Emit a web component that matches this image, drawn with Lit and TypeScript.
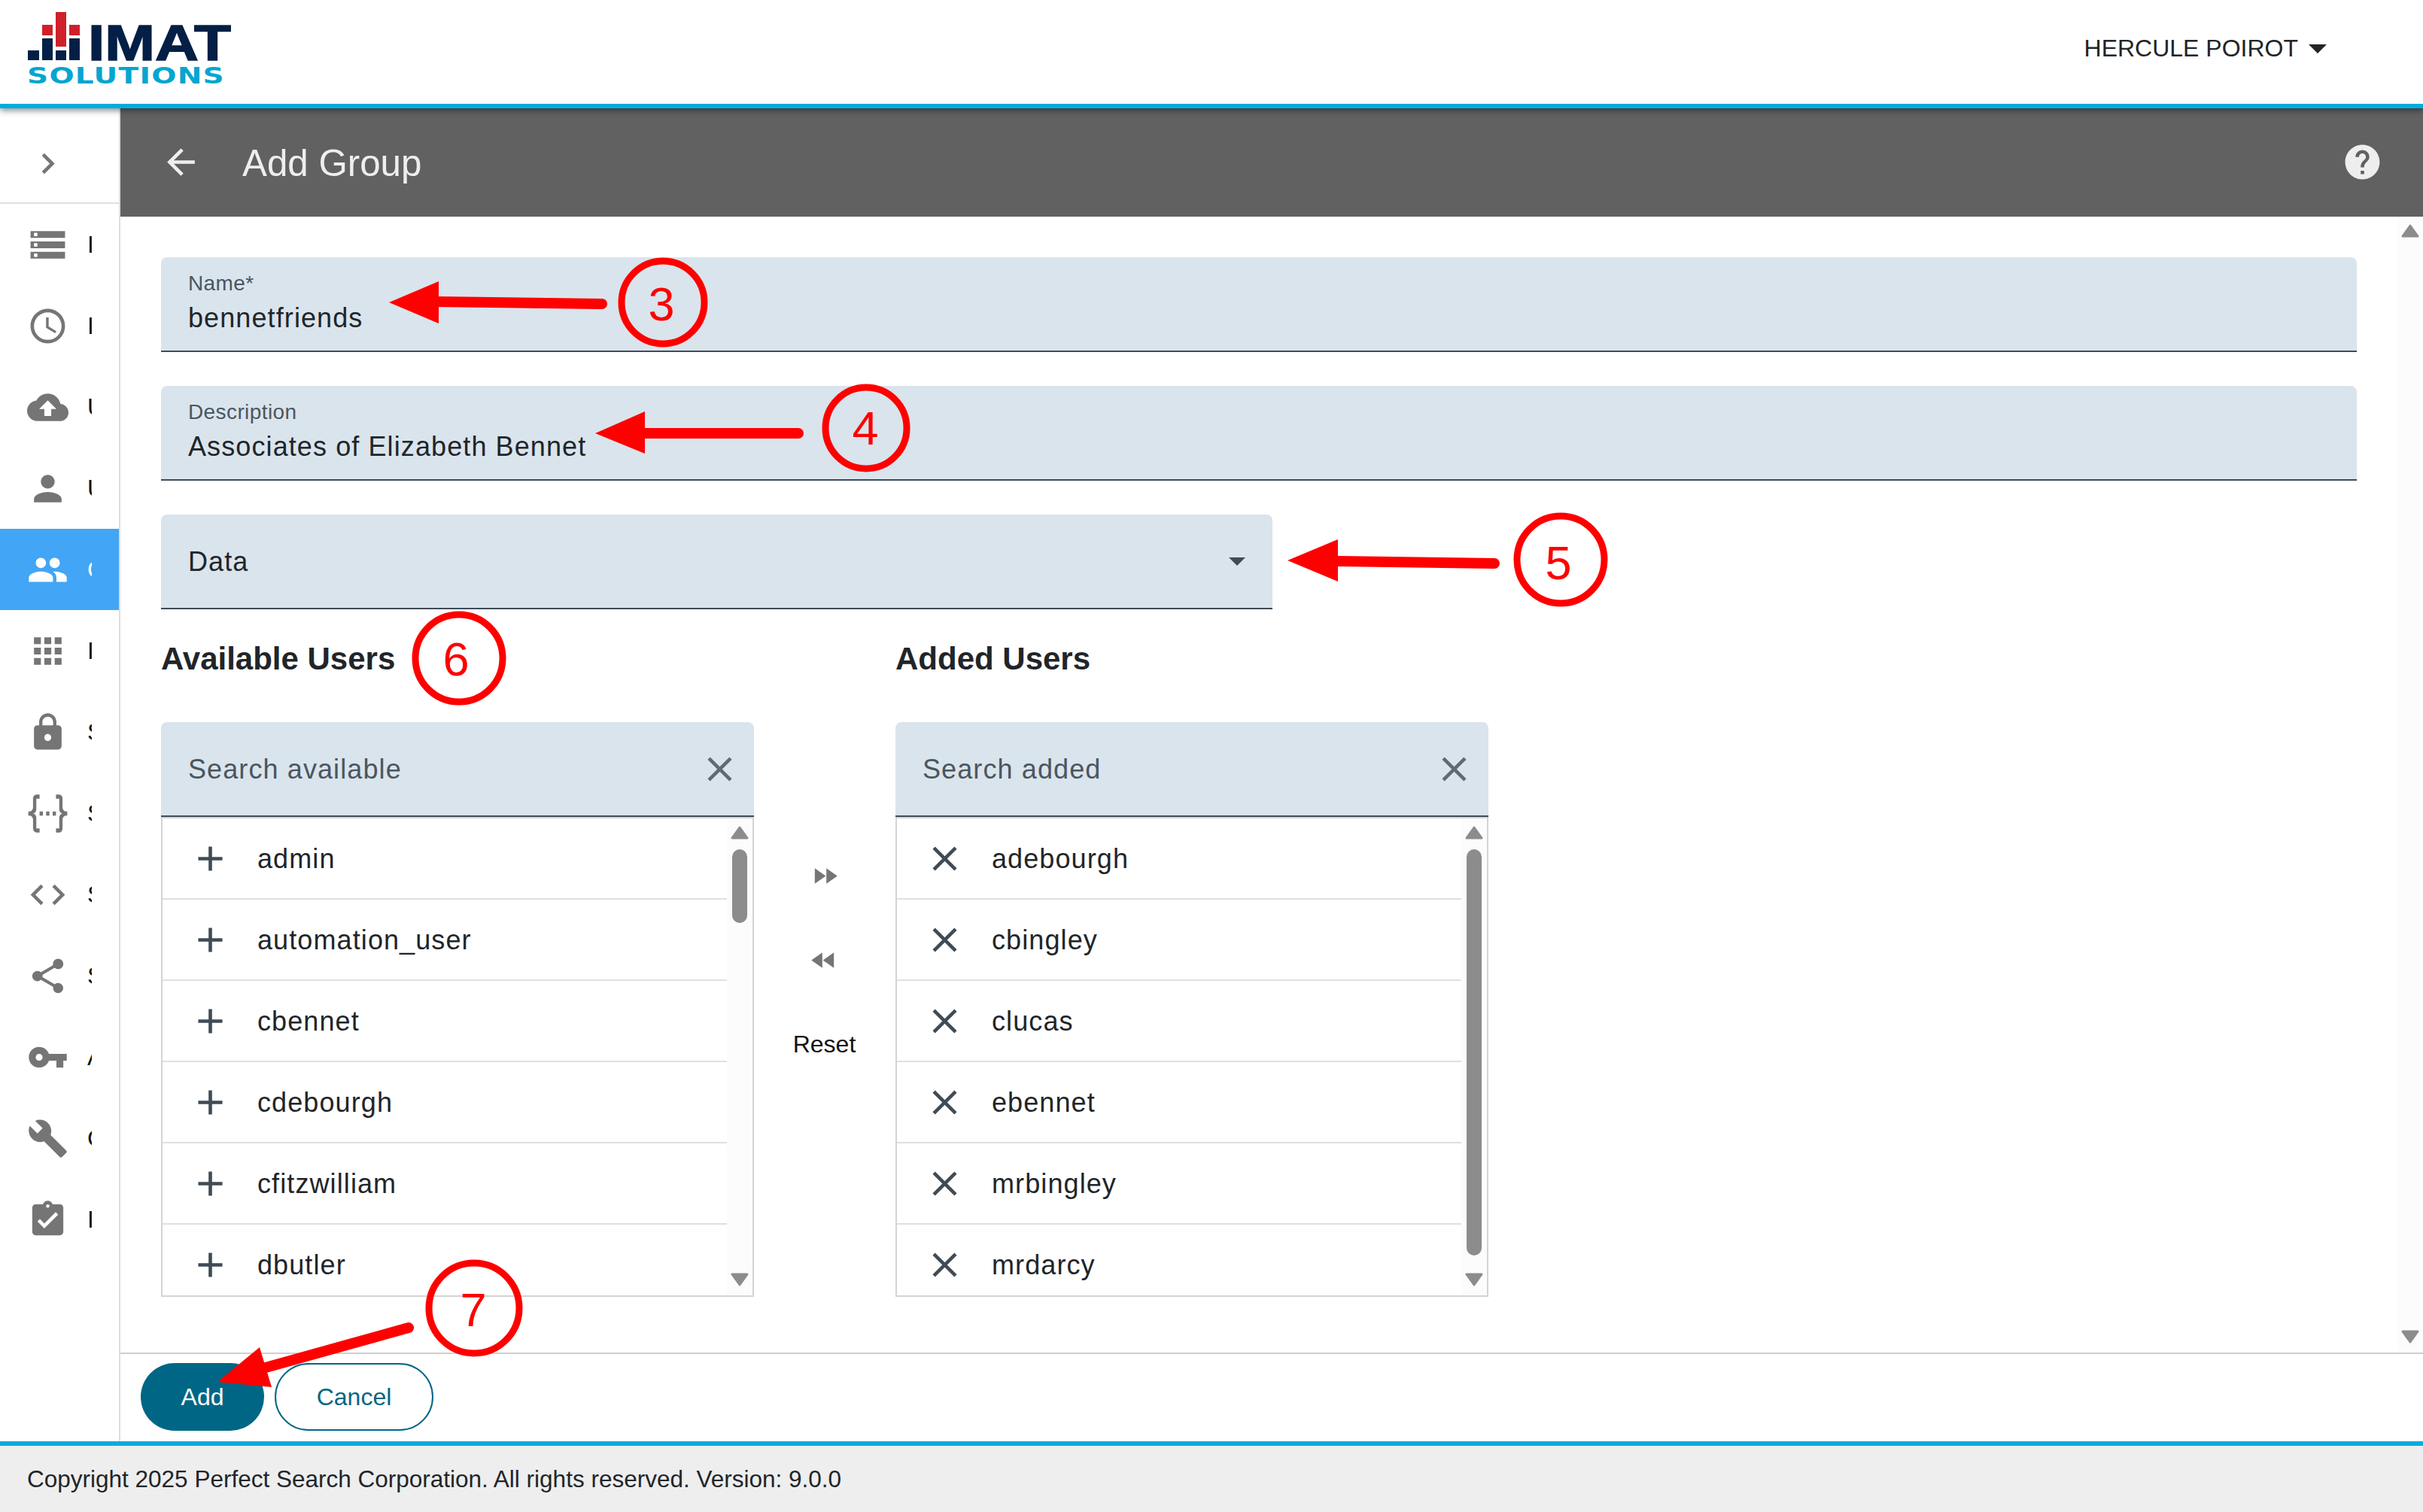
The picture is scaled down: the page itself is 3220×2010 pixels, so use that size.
import { LitElement, html, css, svg } from "lit";
import { customElement } from "lit/decorators.js";

const P = {
  storage: "M2 20h20v-4H2v4zm2-3h2v2H4v-2zM2 4v4h20V4H2zm4 3H4V5h2v2zm-4 7h20v-4H2v4zm2-3h2v2H4v-2z",
  clock: "M11.99 2C6.47 2 2 6.48 2 12s4.47 10 9.99 10C17.52 22 22 17.52 22 12S17.52 2 11.99 2zM12 20c-4.42 0-8-3.58-8-8s3.58-8 8-8 8 3.58 8 8-3.58 8-8 8zm.5-13H11v6l5.25 3.15.75-1.23-4.5-2.67z",
  cloud: "M19.35 10.04C18.67 6.59 15.64 4 12 4 9.11 4 6.6 5.64 5.35 8.04 2.34 8.36 0 10.91 0 14c0 3.31 2.69 6 6 6h13c2.76 0 5-2.24 5-5 0-2.64-2.05-4.78-4.65-4.96zM14 13v4h-4v-4H7l5-5 5 5h-3z",
  person: "M12 12c2.21 0 4-1.79 4-4s-1.79-4-4-4-4 1.79-4 4 1.79 4 4 4zm0 2c-2.67 0-8 1.34-8 4v2h16v-2c0-2.66-5.33-4-8-4z",
  people: "M16 11c1.66 0 2.99-1.34 2.99-3S17.66 5 16 5c-1.66 0-3 1.34-3 3s1.34 3 3 3zm-8 0c1.66 0 2.99-1.34 2.99-3S9.66 5 8 5C6.34 5 5 6.34 5 8s1.34 3 3 3zm0 2c-2.33 0-7 1.17-7 3.5V19h14v-2.5c0-2.33-4.67-3.5-7-3.5zm8 0c-.29 0-.62.02-.97.05 1.16.84 1.97 1.97 1.97 3.45V19h6v-2.5c0-2.33-4.67-3.5-7-3.5z",
  apps: "M4 8h4V4H4v4zm6 12h4v-4h-4v4zm-6 0h4v-4H4v4zm0-6h4v-4H4v4zm6 0h4v-4h-4v4zm6-10v4h4V4h-4zm-6 4h4V4h-4v4zm6 6h4v-4h-4v4zm0 6h4v-4h-4v4z",
  lock: "M18 8h-1V6c0-2.76-2.24-5-5-5S7 3.24 7 6v2H6c-1.1 0-2 .9-2 2v10c0 1.1.9 2 2 2h12c1.1 0 2-.9 2-2V10c0-1.1-.9-2-2-2zm-6 9c-1.1 0-2-.9-2-2s.9-2 2-2 2 .9 2 2-.9 2-2 2zm3.1-9H8.9V6c0-1.71 1.39-3.1 3.1-3.1 1.71 0 3.1 1.39 3.1 3.1v2z",
  json: "M5,3H7V5H5V10A2,2 0 0,1 3,12A2,2 0 0,1 5,14V19H7V21H5C3.93,20.73 3,20.1 3,19V15A2,2 0 0,0 1,13H0V11H1A2,2 0 0,0 3,9V5A2,2 0 0,1 5,3M19,3A2,2 0 0,1 21,5V9A2,2 0 0,0 23,11H24V13H23A2,2 0 0,0 21,15V19A2,2 0 0,1 19,21H17V19H19V14A2,2 0 0,1 21,12A2,2 0 0,1 19,10V5H17V3H19M7,11h2v2H7zM11,11h2v2H11zM15,11h2v2H15z",
  code: "M9.4 16.6L4.8 12l4.6-4.6L8 6l-6 6 6 6 1.4-1.4zm5.2 0l4.6-4.6-4.6-4.6L16 6l6 6-6 6-1.4-1.4z",
  share: "M18 16.08c-.76 0-1.44.3-1.96.77L8.91 12.7c.05-.23.09-.46.09-.7s-.04-.47-.09-.7l7.05-4.11c.54.5 1.25.81 2.04.81 1.66 0 3-1.34 3-3s-1.34-3-3-3-3 1.34-3 3c0 .24.04.47.09.7L8.04 9.81C7.5 9.31 6.79 9 6 9c-1.66 0-3 1.34-3 3s1.34 3 3 3c.79 0 1.5-.31 2.04-.81l7.12 4.16c-.05.21-.08.43-.08.65 0 1.61 1.31 2.92 2.92 2.92 1.61 0 2.92-1.31 2.92-2.92s-1.31-2.92-2.92-2.92z",
  key: "M12.65 10C11.83 7.67 9.61 6 7 6c-3.31 0-6 2.69-6 6s2.69 6 6 6c2.61 0 4.83-1.67 5.65-4H17v4h4v-4h2v-4H12.65zM7 14c-1.1 0-2-.9-2-2s.9-2 2-2 2 .9 2 2-.9 2-2 2z",
  build: "M22.7 19l-9.1-9.1c.9-2.3.4-5-1.5-6.9-2-2-5-2.4-7.4-1.3L9 6 6 9 1.6 4.7C.4 7.1.9 10.1 2.9 12.1c1.9 1.9 4.6 2.4 6.9 1.5l9.1 9.1c.4.4 1 .4 1.4 0l2.3-2.3c.5-.4.5-1.1.1-1.4z",
  task: "M19 3h-4.18C14.4 1.84 13.3 1 12 1c-1.3 0-2.4.84-2.82 2H5c-1.1 0-2 .9-2 2v14c0 1.1.9 2 2 2h14c1.1 0 2-.9 2-2V5c0-1.1-.9-2-2-2zm-7 0c.55 0 1 .45 1 1s-.45 1-1 1-1-.45-1-1 .45-1 1-1zm-2 14l-4-4 1.41-1.41L10 14.17l6.59-6.59L18 9l-8 8z",
  chevron: "M10 6L8.59 7.41 13.17 12l-4.58 4.59L10 18l6-6z",
  back: "M20 11H7.83l5.59-5.59L12 4l-8 8 8 8 1.41-1.41L7.83 13H20v-2z",
  help: "M12 2C6.48 2 2 6.48 2 12s4.48 10 10 10 10-4.48 10-10S17.52 2 12 2zm1 17h-2v-2h2v2zm2.07-7.75l-.9.92C13.45 12.9 13 13.5 13 15h-2v-.5c0-1.1.45-2.1 1.17-2.83l1.24-1.26c.37-.36.59-.86.59-1.41 0-1.1-.9-2-2-2s-2 .9-2 2H8c0-2.21 1.79-4 4-4s4 1.79 4 4c0 .88-.36 1.68-.93 2.25z",
  close: "M19 6.41L17.59 5 12 10.59 6.41 5 5 6.41 10.59 12 5 17.59 6.41 19 12 13.41 17.59 19 19 17.59 13.41 12z",
  add: "M19 13h-6v6h-2v-6H5v-2h6V5h2v6h6v2z",
  ff: "M4 18l8.5-6L4 6v12zm9-12v12l8.5-6L13 6z",
  rew: "M11 18V6l-8.5 6 8.5 6zm.5-6l8.5 6V6l-8.5 6z",
};

const icon = (d: string, cls = "") =>
  html`<svg class="ic ${cls}" viewBox="0 0 24 24"><path d="${d}"></path></svg>`;

const NAV = [
  [P.storage, "Indexes"],
  [P.clock, "Import History"],
  [P.cloud, "Upload"],
  [P.person, "Users"],
  [P.people, "Groups"],
  [P.apps, "Index"],
  [P.lock, "Security"],
  [P.json, "Scripts"],
  [P.code, "Snippets"],
  [P.share, "Shares"],
  [P.key, "API Keys"],
  [P.build, "Configuration"],
  [P.task, "Issues"],
];

const AVAILABLE = ["admin", "automation_user", "cbennet", "cdebourgh", "cfitzwilliam", "dbutler"];
const ADDED = ["adebourgh", "cbingley", "clucas", "ebennet", "mrbingley", "mrdarcy"];

const scrollbar = (thumbClass: string) => html`
  <div class="track">
    <svg class="arr" viewBox="0 0 24 18"><path d="M12 2 L22 16 H2 Z"></path></svg>
    <div class="thumb-wrap"><div class="thumb ${thumbClass}"></div></div>
    <svg class="arr" viewBox="0 0 24 18"><path d="M2 2 H22 L12 16 Z"></path></svg>
  </div>`;

const arrow = (x1: number, y1: number, x2: number, y2: number, head: string) => svg`
  <line x1="${x1}" y1="${y1}" x2="${x2}" y2="${y2}" stroke="#fe0000" stroke-width="14" stroke-linecap="round"></line>
  <polygon points="${head}" fill="#fe0000"></polygon>`;

const mark = (cx: number, cy: number, rx: number, ry: number, n: string, tx: number, ty: number) => svg`
  <ellipse cx="${cx}" cy="${cy}" rx="${rx}" ry="${ry}" fill="none" stroke="#fe0000" stroke-width="9"></ellipse>
  <text x="${tx}" y="${ty}" text-anchor="middle" class="num">${n}</text>`;

@customElement("app-root")
export class AppRoot extends LitElement {
  static styles = css`
    :host {
      display: block;
      width: 3220px;
      height: 2010px;
      font-family: "Liberation Sans", Arial, sans-serif;
      color: #212529;
      position: relative;
      overflow: hidden;
      background: #fff;
    }
    .page { display: flex; flex-direction: column; height: 2010px; }
    header {
      height: 138px;
      flex: none;
      border-bottom: 6px solid #00acdf;
      display: flex;
      align-items: center;
      justify-content: space-between;
      box-shadow: 0 3px 8px rgba(0,0,0,.45);
      position: relative;
      z-index: 2;
      background: #fff;
    }
    .logo { width: 320px; height: 138px; display: block; }
    .user { display: flex; align-items: center; font-size: 32px; margin-right: 128px; gap: 14px; margin-bottom: 9px; }
    .caret { width: 0; height: 0; border-left: 12px solid transparent; border-right: 12px solid transparent; border-top: 12px solid #212529; }
    .body { flex: 1; display: flex; min-height: 0; }
    nav { width: 158px; flex: none; border-right: 2px solid #dedede; display: flex; flex-direction: column; }
    .toggle { height: 103px; flex: none; border-bottom: 2px solid #e0e0e0; display: flex; align-items: center; padding: 22px 0 0 36px; }
    .ic { width: 55px; height: 55px; flex: none; display: block; fill: #757575; }
    .ic.tall { transform: scale(.95, 1.23); }
    .item { height: 108px; flex: none; display: flex; align-items: center; padding-left: 36px; }
    .item .lab { margin-left: 25px; width: 6px; overflow: hidden; white-space: nowrap; font-size: 32px; line-height: 40px; color: #111; }
    .item.on { background: #42a5f5; }
    .item.on .ic { fill: #fff; }
    .item.on .lab { color: #fff; }
    main { flex: 1; min-width: 0; display: flex; flex-direction: column; }
    .title { height: 144px; flex: none; background: #616161; color: #eee; display: flex; align-items: center; padding: 0 53px 0 53px; }
    .title .ic { fill: #eee; margin-top: -2px; }
    .title h1 { flex: 1; margin: 2px 0 0 54px; font-weight: 400; font-size: 49.3px; line-height: 60px; }
    .mid { flex: 1; min-height: 0; display: flex; }
    .content { flex: 1; min-width: 0; padding: 54px 54px 0; overflow: hidden; }
    .field {
      height: 124px;
      background: #dae4ed;
      border-bottom: 2px solid #3f4b55;
      border-radius: 8px 8px 0 0;
      margin-bottom: 45px;
      padding: 0 36px;
      display: flex;
      flex-direction: column;
      justify-content: center;
    }
    .field label { font-size: 28px; line-height: 32px; color: #4a5660; letter-spacing: .4px; }
    .field .val { font-size: 36px; line-height: 48px; letter-spacing: 1.1px; color: #212529; margin-top: 6px; }
    .field.sel { width: 1441px; padding-right: 0; margin-bottom: 0; flex-direction: row; align-items: center; justify-content: space-between; }
    .field.sel .val { margin-top: 1px; }
    .sel .caret { border-left-width: 11px; border-right-width: 11px; border-top-width: 11px; border-top-color: #3f4b55; margin-right: 36px; }
    .cols { display: grid; grid-template-columns: 788px 188px 788px; }
    .cols h2 { margin: 0; height: 150px; box-sizing: border-box; padding-top: 38px; font: 700 42px/56px "Liberation Sans", sans-serif; color: #212529; }
    .search {
      height: 124px;
      background: #dae4ed;
      border-bottom: 2px solid #3f4b55;
      border-radius: 8px 8px 0 0;
      display: flex;
      align-items: center;
      justify-content: space-between;
      padding: 0 18px 0 36px;
      font-size: 36px;
      letter-spacing: 1.1px;
      color: #4a5660;
    }
    .search span { margin-top: 1px; }
    .search .ic { fill: #5f6b73; }
    .list { height: 638px; box-sizing: border-box; border: 2px solid #d4d4d4; display: flex; overflow: hidden; }
    .rows { flex: 1; min-width: 0; }
    .row { height: 106px; border-bottom: 2px solid #e0e0e0; display: flex; align-items: center; padding-left: 36px; font-size: 36px; letter-spacing: 1.1px; flex: none; }
    .row .ic { fill: #3f4b55; }
    .row span { margin-left: 35px; margin-top: 1px; }
    .track { width: 34px; flex: none; background: #fcfcfc; display: flex; flex-direction: column; align-items: center; padding: 10px 0 12px; box-sizing: border-box; }
    .arr { width: 24px; height: 18px; flex: none; fill: #8c8c8c; stroke: #8c8c8c; stroke-width: 3; stroke-linejoin: round; }
    .thumb-wrap { flex: 1; width: 20px; padding-top: 13px; }
    .thumb { width: 20px; background: #8c8c8c; border-radius: 10px; }
    .t-short { height: 98px; }
    .t-long { height: 540px; }
    .t-none { height: 0; }
    .center { display: flex; flex-direction: column; align-items: center; padding-top: 148px; }
    .center .ic { width: 41px; height: 41px; fill: #757575; }
    .center .b { height: 112px; display: flex; align-items: center; }
    .center .b.rw { transform: translateX(-2px); }
    .center .reset { height: 112px; display: flex; align-items: center; font-size: 32px; color: #111; margin-left: -1px; }
    .actions { height: 104px; flex: none; border-top: 2px solid #cfcfcf; display: flex; align-items: flex-start; padding: 12px 0 0 27px; gap: 14px; }
    .btn { height: 90px; box-sizing: border-box; border-radius: 45px; font-size: 32px; display: flex; align-items: center; justify-content: center; }
    .btn.pri { width: 164px; background: #006685; color: #fff; }
    .btn.sec { width: 211px; border: 2px solid #006685; color: #006685; }
    footer { height: 88px; flex: none; border-top: 6px solid #00acdf; background: #eee; display: flex; align-items: center; padding-left: 36px; font-size: 31.5px; color: #212529; }
    .overlay { position: absolute; left: 0; top: 0; width: 3220px; height: 2010px; pointer-events: none; z-index: 5; }
    .num { font: 63px "Liberation Sans", sans-serif; fill: #fe0000; }
    .logo-a { font: 700 67px "Liberation Sans", sans-serif; fill: #031f45; stroke: #031f45; stroke-width: 1.5px; }
    .logo-b { font: 700 30px "DejaVu Sans", sans-serif; fill: #05a5d1; letter-spacing: 1px; }
  `;

  render() {
    return html`
      <div class="page">
        <header>
          <svg class="logo" viewBox="0 0 320 138">
            <g fill="#031f45">
              <rect x="37" y="67" width="15" height="13"></rect>
              <rect x="56" y="51" width="14" height="29"></rect>
              <rect x="74" y="67" width="14" height="13"></rect>
              <rect x="92" y="51" width="14" height="29"></rect>
            </g>
            <g fill="#cf2029">
              <rect x="74" y="16" width="14" height="46"></rect>
              <rect x="56" y="33" width="14" height="14"></rect>
              <rect x="92" y="33" width="14" height="14"></rect>
            </g>
            <text x="117" y="80" class="logo-a" textLength="190" lengthAdjust="spacingAndGlyphs">IMAT</text>
            <text transform="translate(36 111) scale(1.3 1)" class="logo-b">SOLUTIONS</text>
          </svg>
          <div class="user"><span>HERCULE POIROT</span><span class="caret"></span></div>
        </header>
        <div class="body">
          <nav>
            <div class="toggle">${icon(P.chevron)}</div>
            ${NAV.map(([d, l], i) => html`<div class="item ${i === 4 ? "on" : ""}">${icon(d, d === P.json ? "tall" : "")}<div class="lab">${l}</div></div>`)}
          </nav>
          <main>
            <div class="title">${icon(P.back)}<h1>Add Group</h1>${icon(P.help)}</div>
            <div class="mid">
              <div class="content">
                <div class="field"><label>Name*</label><div class="val">bennetfriends</div></div>
                <div class="field"><label>Description</label><div class="val">Associates of Elizabeth Bennet</div></div>
                <div class="field sel"><div class="val">Data</div><span class="caret"></span></div>
                <div class="cols">
                  <h2>Available Users</h2><div></div><h2>Added Users</h2>
                  <div>
                    <div class="search"><span>Search available</span>${icon(P.close)}</div>
                    <div class="list">
                      <div class="rows">${AVAILABLE.map((n) => html`<div class="row">${icon(P.add)}<span>${n}</span></div>`)}</div>
                      ${scrollbar("t-short")}
                    </div>
                  </div>
                  <div class="center">
                    <div class="b">${icon(P.ff)}</div>
                    <div class="b rw">${icon(P.rew)}</div>
                    <div class="reset">Reset</div>
                  </div>
                  <div>
                    <div class="search"><span>Search added</span>${icon(P.close)}</div>
                    <div class="list">
                      <div class="rows">${ADDED.map((n) => html`<div class="row">${icon(P.close)}<span>${n}</span></div>`)}</div>
                      ${scrollbar("t-long")}
                    </div>
                  </div>
                </div>
              </div>
              ${scrollbar("t-none")}
            </div>
            <div class="actions">
              <div class="btn pri">Add</div>
              <div class="btn sec">Cancel</div>
            </div>
          </main>
        </div>
        <footer>Copyright 2025 Perfect Search Corporation. All rights reserved. Version: 9.0.0</footer>
      </div>
      <svg class="overlay" viewBox="0 0 3220 2010">
        ${arrow(580, 401, 800, 404, "517,402 583,374 583,430")}
        ${mark(881, 402, 55, 55, "3", 879, 426)}
        ${arrow(850, 576, 1061, 576, "791,576 857,547 857,603")}
        ${mark(1151, 569, 54, 54, "4", 1150, 591)}
        ${arrow(1775, 746, 1986, 749, "1711,745 1778,717 1778,773")}
        ${mark(2074, 744, 58, 58, "5", 2071, 770)}
        ${mark(610, 875, 58, 58, "6", 606, 898)}
        ${arrow(353, 1818, 543, 1765, "289,1837 345,1791 361,1844")}
        ${mark(630, 1739, 60, 60, "7", 629, 1763)}
      </svg>
    `;
  }
}
